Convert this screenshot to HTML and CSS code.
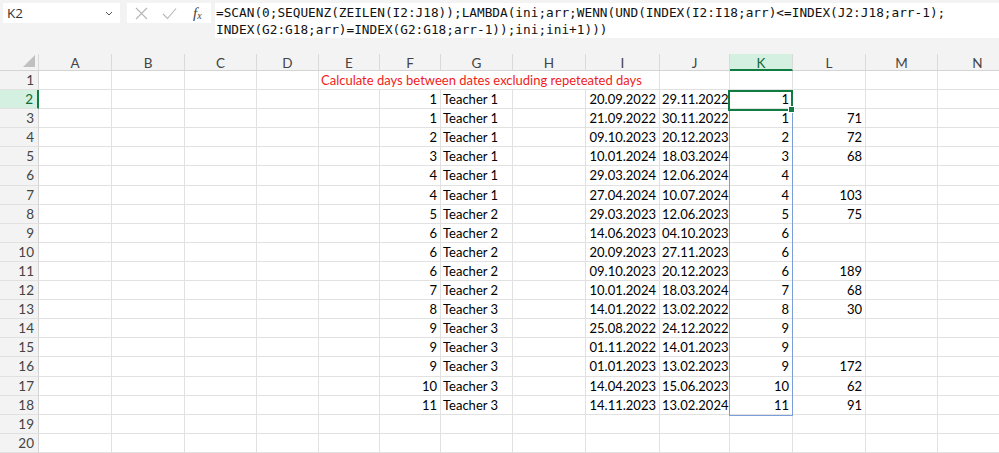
FILE: index.html
```html
<!DOCTYPE html>
<html>
<head>
<meta charset="utf-8">
<link rel="stylesheet" href="styles.css">
</head>
<body>
<div class="app">
  <div class="fbar">
    <div class="namebox"><span>K2</span><svg class="chev" width="8" height="5" viewBox="0 0 8 5"><path d="M1 1 L4 4 L7 1" fill="none" stroke="#555" stroke-width="1"/></svg></div>
    <div class="fxbox">
      <svg width="13" height="13" viewBox="0 0 13 13"><path d="M1 1 L12 12 M12 1 L1 12" stroke="#b5b5b5" stroke-width="1.1" fill="none"/></svg>
      <svg width="15" height="13" viewBox="0 0 15 13"><path d="M1 7 L5.5 11.5 L14 1.5" stroke="#b5b5b5" stroke-width="1.1" fill="none"/></svg>
      <span class="fx">f<sub>x</sub></span>
    </div>
    <div class="formula">=SCAN(0;SEQUENZ(ZEILEN(I2:J18));LAMBDA(ini;arr;WENN(UND(INDEX(I2:I18;arr)&lt;=INDEX(J2:J18;arr-1);<br>INDEX(G2:G18;arr)=INDEX(G2:G18;arr-1));ini;ini+1)))</div>
  </div>
  <div class="sheet" id="sheet"></div>
</div>
<script src="app.js"></script>
</body>
</html>
```
FILE: app.js
```js
const cols = ['A','B','C','D','E','F','G','H','I','J','K','L','M','N'];
const data = [
 [1,'Teacher 1','20.09.2022','29.11.2022',1,''],
 [1,'Teacher 1','21.09.2022','30.11.2022',1,71],
 [2,'Teacher 1','09.10.2023','20.12.2023',2,72],
 [3,'Teacher 1','10.01.2024','18.03.2024',3,68],
 [4,'Teacher 1','29.03.2024','12.06.2024',4,''],
 [4,'Teacher 1','27.04.2024','10.07.2024',4,103],
 [5,'Teacher 2','29.03.2023','12.06.2023',5,75],
 [6,'Teacher 2','14.06.2023','04.10.2023',6,''],
 [6,'Teacher 2','20.09.2023','27.11.2023',6,''],
 [6,'Teacher 2','09.10.2023','20.12.2023',6,189],
 [7,'Teacher 2','10.01.2024','18.03.2024',7,68],
 [8,'Teacher 3','14.01.2022','13.02.2022',8,30],
 [9,'Teacher 3','25.08.2022','24.12.2022',9,''],
 [9,'Teacher 3','01.11.2022','14.01.2023',9,''],
 [9,'Teacher 3','01.01.2023','13.02.2023',9,172],
 [10,'Teacher 3','14.04.2023','15.06.2023',10,62],
 [11,'Teacher 3','14.11.2023','13.02.2024',11,91]
];
const s = document.getElementById('sheet');
function cell(cls, txt){const d=document.createElement('div');d.className=cls;d.textContent=txt;s.appendChild(d);return d;}
const corner = cell('hd corner','');
corner.innerHTML='<span class="tri"></span>';
cols.forEach(c=>cell('hd colh'+(c==='K'?' sel':''),c));
for(let r=1;r<=20;r++){
  cell('hd rowh'+(r===2?' sel':''),r);
  cols.forEach(c=>{
    if(r===1 && ['F','G','H','I'].includes(c)) return;
    let txt='',cls='c';
    if(r===1 && c==='E'){txt='Calculate days between dates excluding repeteated days';cls+=' title';}
    const d=data[r-2];
    if(d){
      if(c==='F'){txt=d[0];cls+=' num';}
      if(c==='G'){txt=d[1];}
      if(c==='I'){txt=d[2];cls+=' num';}
      if(c==='J'){txt=d[3];cls+=' num';}
      if(c==='K'){txt=d[4];cls+=' num';}
      if(c==='L'){txt=d[5];cls+=' num';}
    }
    cell(cls,txt);
  });
}
const spill=document.createElement('div');spill.className='spill';s.appendChild(spill);
const act=document.createElement('div');act.className='active';act.innerHTML='<span class="handle"></span>';s.appendChild(act);
```
FILE: styles.css
```css
html, body { margin: 0; padding: 0; }
body { background: #fff; overflow: hidden; width: 999px; height: 453px; }
.app { width: 999px; height: 453px; overflow: hidden; background: #f3f3f3; }
.fbar { display: flex; align-items: flex-start; height: 54px; padding: 3px 0 0 3px; box-sizing: border-box; }
.namebox { width: 117px; height: 20px; background: #fff; display: flex; align-items: center; justify-content: space-between; box-sizing: border-box; padding: 0 7px 0 4px; font: 14px "Open Sans", "Liberation Sans", sans-serif; color: #333; }
.namebox span { font-size: 13.5px; }
.chev { margin-top: 1px; }
.fxbox { width: 84px; height: 20px; margin-left: 7px; background: #fff; display: flex; align-items: center; gap: 14px; padding-left: 8px; box-sizing: border-box; }
.fx { font: italic 15px "Liberation Serif", "DejaVu Serif", serif; color: #444; margin-left: 2px; }
.fx sub { font-size: 10px; vertical-align: -1px; }
.formula { flex: 1; margin-left: 4px; height: 35px; background: #fff; font: 12.75px/17px "DejaVu Sans Mono", "Liberation Mono", monospace; color: #111; padding: 1px 0 0 1px; box-sizing: border-box; white-space: nowrap; }
.sheet { position: relative; display: grid; grid-template-columns: 39px 73px 73px 72px 62px 61px 61px 72px 73px 74px 70px 63px 73px 72px 80px; grid-template-rows: 17px repeat(20, 19.1px); width: 1060px; font: 13px "Lato", "Carlito", sans-serif; color: #000; }
.c { background: #fff; border-right: 1px solid #e1e1e1; border-bottom: 1px solid #e1e1e1; box-sizing: border-box; padding: 0 3px 0 2px; line-height: 19px; white-space: nowrap; overflow: hidden; }
.c.num { text-align: right; }
.c.title { color: #f01c1c; grid-column: span 5; padding-left: 2px; }
.hd { background: #f3f3f3; color: #444; box-sizing: border-box; border-right: 1px solid #dadada; border-bottom: 1px solid #d4d4d4; line-height: 17px; font-size: 13.5px; }
.colh { text-align: center; border-bottom: 1px solid #d4d4d4; line-height: 18px; }
.rowh { text-align: right; padding-right: 4px; line-height: 19px; border-bottom: 1px solid #e1e1e1; border-right: 1px solid #d4d4d4; }
.corner { position: relative; }
.tri { position: absolute; right: 3px; bottom: 3px; width: 0; height: 0; border-left: 12px solid transparent; border-bottom: 12px solid #c0c0c0; }
.colh.sel { background: #d3f0e0; color: #0e6b3a; border-bottom: 2px solid #107c41; }
.rowh.sel { background: #d3f0e0; color: #0e6b3a; border-right: 2px solid #107c41; }
.spill { position: absolute; left: 729px; top: 36.1px; width: 64px; height: 325.7px; border: 1px solid #7c9ed8; box-sizing: border-box; pointer-events: none; }
.active { position: absolute; left: 728px; top: 35.5px; width: 65px; height: 21px; border: 2px solid #107c41; box-sizing: border-box; }
.handle { position: absolute; right: -4px; bottom: -4px; width: 5px; height: 5px; background: #107c41; border: 1px solid #fff; }
```
